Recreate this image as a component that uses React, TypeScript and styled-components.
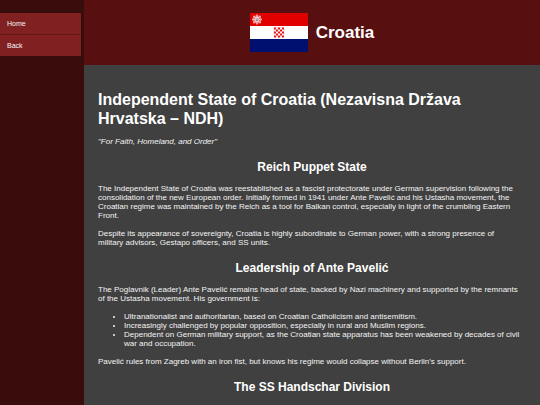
import React from "react";
import styled, { createGlobalStyle } from "styled-components";

const GlobalStyle = createGlobalStyle`
  *, *::before, *::after { box-sizing: border-box; }
  body {
    margin: 0;
    background: #404040;
    color: #f4f4f4;
    font-family: "Liberation Sans", Arial, sans-serif;
    font-size: 8px;
    line-height: 9px;
    overflow: hidden;
  }
`;

const Page = styled.div`
  display: grid;
  grid-template-columns: 84px minmax(0, 1fr);
  height: 100vh;
`;

const Sidebar = styled.nav`
  background: #3a0d0d;
  padding: 13px 3px 0 0;
`;

const NavList = styled.ul`
  list-style: none;
  margin: 0;
  padding: 0;
`;

const NavItem = styled.li`
  & + & { border-top: 1px solid #651717; }
`;

const NavLink = styled.a`
  display: block;
  padding: 6px 7px;
  background: #802020;
  color: #f4f4f4;
  font-size: 7px;
  text-decoration: none;
`;

const Main = styled.div`
  min-width: 0;
  overflow: hidden;
`;

const Banner = styled.header`
  display: flex;
  align-items: center;
  justify-content: center;
  gap: 8px;
  padding: 13px;
  background: #580f0f;
`;

const BannerTitle = styled.h1`
  margin: 0;
  color: #fff;
  font-size: 17px;
  line-height: 19px;
`;

const FlagImage = styled.svg`
  display: block;
  width: 58px;
  height: 39px;
`;

const Article = styled.main`
  padding: 25px 14px 0;
`;

const Title = styled.h1`
  margin: 0 0 9px;
  color: #fff;
  font-size: 16px;
  line-height: 19px;
`;

const SectionTitle = styled.h2`
  margin: 14px 0 10px;
  color: #fff;
  font-size: 12px;
  line-height: 14px;
  text-align: center;
`;

const Paragraph = styled.p`
  margin: 0 0 9px;
  padding-right: 6px;
`;

const BulletList = styled.ul`
  margin: 0 0 9px;
  padding: 0 6px 0 26px;
`;

const squares = Array.from({ length: 25 }, (_, i) => i).filter((i) => i % 2 === 0);
const spokes = [0, 45, 90, 135];

const Flag = () => (
  <FlagImage viewBox="0 0 58 39" role="img" aria-label="Flag of Croatia">
    <rect width="58" height="39" fill="#fff" />
    <rect width="58" height="13" fill="#e00000" />
    <rect y="26" width="58" height="13" fill="#001070" />
    <g fill="#e01818">
      {squares.map((i) => (
        <rect key={i} x={24 + (i % 5) * 2} y={14.5 + Math.floor(i / 5) * 2} width="2" height="2" />
      ))}
    </g>
    <path d="M24 14.5h10v6q0 3-5 4q-5-1-5-4z" fill="none" stroke="#e87070" strokeWidth="0.4" />
    <g fill="none" stroke="#f7b0b0" strokeWidth="1.6">
      {spokes.map((a) => (
        <path key={a} d="M2 6.5h10" transform={`rotate(${a} 7 6.5)`} />
      ))}
      <rect x="3.7" y="3.2" width="6.6" height="6.6" strokeWidth="0.8" />
    </g>
    <circle cx="7" cy="6.5" r="2.4" fill="#f8e4e4" />
    <path d="M6.2 5.2v2.5h1.7v-2.5" fill="none" stroke="#806080" strokeWidth="0.8" />
  </FlagImage>
);

const links = ["Home", "Back"];

const traits = [
  "Ultranationalist and authoritarian, based on Croatian Catholicism and antisemitism.",
  "Increasingly challenged by popular opposition, especially in rural and Muslim regions.",
  "Dependent on German military support, as the Croatian state apparatus has been weakened by decades of civil war and occupation.",
];

export default function App() {
  return (
    <>
      <GlobalStyle />
      <Page>
        <Sidebar aria-label="Site">
          <NavList>
            {links.map((label) => (
              <NavItem key={label}>
                <NavLink href="#">{label}</NavLink>
              </NavItem>
            ))}
          </NavList>
        </Sidebar>
        <Main>
          <Banner>
            <Flag />
            <BannerTitle>Croatia</BannerTitle>
          </Banner>
          <Article>
            <Title>Independent State of Croatia (Nezavisna Država Hrvatska – NDH)</Title>
            <Paragraph>
              <em>"For Faith, Homeland, and Order"</em>
            </Paragraph>
            <SectionTitle>Reich Puppet State</SectionTitle>
            <Paragraph>
              The Independent State of Croatia was reestablished as a fascist protectorate under German supervision
              following the consolidation of the new European order. Initially formed in 1941 under Ante Pavelić and
              his Ustasha movement, the Croatian regime was maintained by the Reich as a tool for Balkan control,
              especially in light of the crumbling Eastern Front.
            </Paragraph>
            <Paragraph>
              Despite its appearance of sovereignty, Croatia is highly subordinate to German power, with a strong
              presence of military advisors, Gestapo officers, and SS units.
            </Paragraph>
            <SectionTitle>Leadership of Ante Pavelić</SectionTitle>
            <Paragraph>
              The Poglavnik (Leader) Ante Pavelić remains head of state, backed by Nazi machinery and supported by the
              remnants of the Ustasha movement. His government is:
            </Paragraph>
            <BulletList>
              {traits.map((trait) => (
                <li key={trait}>{trait}</li>
              ))}
            </BulletList>
            <Paragraph>
              Pavelić rules from Zagreb with an iron fist, but knows his regime would collapse without Berlin's
              support.
            </Paragraph>
            <SectionTitle>The SS Handschar Division</SectionTitle>
          </Article>
        </Main>
      </Page>
    </>
  );
}
